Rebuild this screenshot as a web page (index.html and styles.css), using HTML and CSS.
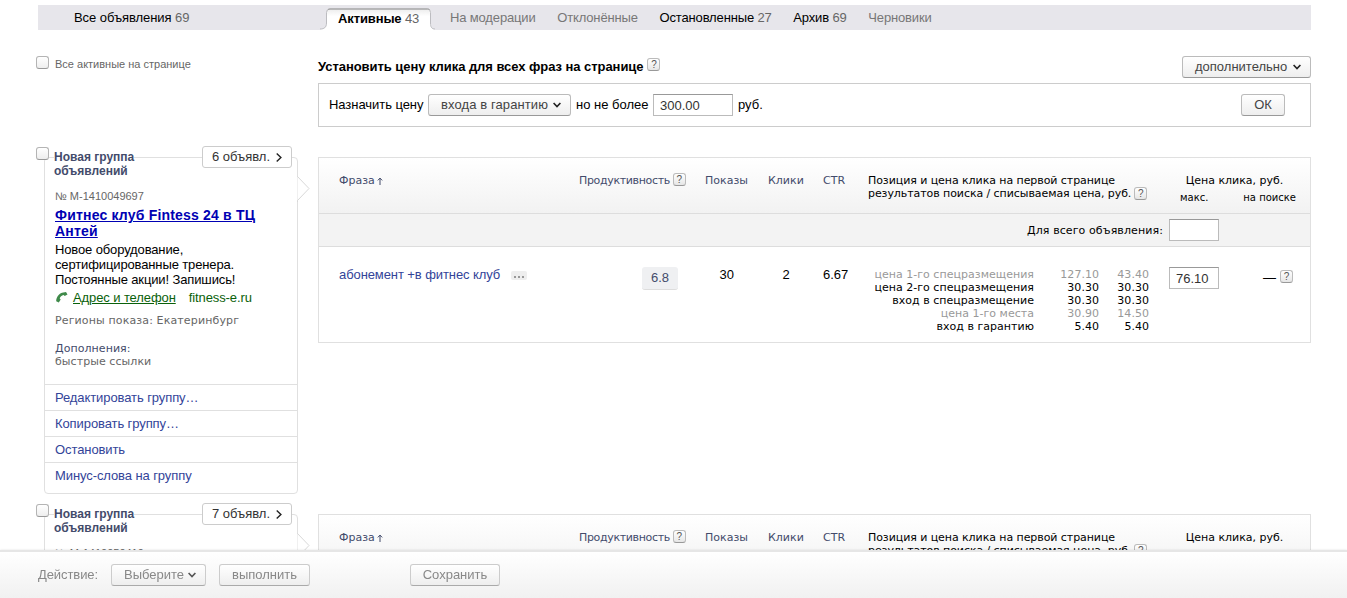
FILE: index.html
```
<!DOCTYPE html>
<html lang="ru">
<head>
<meta charset="utf-8">
<title>Активные объявления</title>
<link rel="stylesheet" href="styles.css">
</head>
<body>
<svg class="defs"><defs>
<linearGradient id="tabfill" x1="0" y1="0" x2="0" y2="1"><stop offset="0" stop-color="#ececec"/><stop offset=".35" stop-color="#fff"/></linearGradient>
<symbol id="chev" viewBox="0 0 8 6"><path d="M.6 1l3.4 3.600L7.400 1" fill="none" stroke="currentColor" stroke-width="1.6"/></symbol>
<symbol id="right" viewBox="0 0 6 9"><path d="M.7.6l4.200 3.900L.7 8.400" fill="none" stroke="currentColor" stroke-width="1.4"/></symbol>
<symbol id="up" viewBox="0 0 5 8"><path d="M2.500 8V1M.3 3.400l2.200-2.300 2.200 2.300" fill="none" stroke="currentColor" stroke-width="1"/></symbol>
<symbol id="phone" viewBox="0 0 12 11"><path d="M6 .8L10 0l1.500 2.400-2.800 1.700-1-1.100C5.600 3.400 4.200 4.800 3.700 6.600l1 .9-1.900 2.900L.2 9.200C.2 5.400 2.600 2 6 .8z" fill="#3f8a4a"/></symbol>
<symbol id="nose" viewBox="0 0 13 26"><path d="M.5 0v.5L12 12.500.5 24.500v1.500" fill="#fff" stroke="#d8d8d8"/></symbol>
</defs></svg>

<nav class="tabs">
  <a class="tab all">Все объявления <i>69</i></a>
  <a class="tab active"><svg class="tab-shape" viewBox="0 0 115 22"><path d="M0 21.500C4 21 6.500 19.500 6.500 15V4.500Q6.500 1 10 1H107.500Q111 1 111 4.500V15C111 19.500 112 21 115 21.500V22H0z" fill="url(#tabfill)"/><path d="M0 21C4 21 6.500 19.500 6.500 15V4.500Q6.500 1 10 1H107.500Q110.500 1 110.500 4.500V15C110.500 19.500 112 21 115 21" fill="none" stroke="#bcbcc0"/><path d="M8 1.500Q8.500 1 10 1H107.500Q109 1 109.500 1.500" fill="none" stroke="#999"/></svg><b>Активные</b> <i>43</i></a>
  <a class="tab muted">На модерации</a>
  <a class="tab muted">Отклонённые</a>
  <a class="tab">Остановленные <i>27</i></a>
  <a class="tab">Архив <i>69</i></a>
  <a class="tab muted">Черновики</a>
</nav>

<section class="top">
  <div class="select-all"><span class="check"></span><span>Все активные на странице</span></div>
  <div class="pricing">
    <div class="pricing-head"><h2>Установить цену клика для всех фраз на странице</h2><span class="help">?</span><span class="btn more">дополнительно<svg class="chev"><use href="#chev"/></svg></span></div>
    <div class="pricing-box">
      <span class="assign">Назначить цену</span><span class="btn entry">входа в гарантию<svg class="chev"><use href="#chev"/></svg></span><span class="limit">но не более</span><span class="input max">300.00</span><span class="unit">руб.</span><span class="btn ok">ОК</span>
    </div>
  </div>
</section>

<section class="group">
  <div class="card">
    <span class="check"></span>
    <span class="count">6 объявл.<svg class="right"><use href="#right"/></svg></span>
    <svg class="nose"><use href="#nose"/></svg>
    <h3>Новая группа<br>объявлений</h3>
    <div class="num">№ М-1410049697</div>
    <a class="ad-title">Фитнес клуб Fintess 24 в ТЦ<br>Антей</a>
    <p class="ad-text">Новое оборудование,<br>сертифицированные тренера.<br>Постоянные акции! Запишись!</p>
    <div class="contact"><svg class="phone"><use href="#phone"/></svg><u>Адрес и телефон</u><span class="site">fitness-e.ru</span></div>
    <div class="region">Регионы показа: Екатеринбург</div>
    <div class="extras"><b>Дополнения:</b><br>быстрые ссылки</div>
    <ul class="actions"><li>Редактировать группу…</li><li>Копировать группу…</li><li>Остановить</li><li>Минус-слова на группу</li></ul>
  </div>
  <div class="table">
    <div class="row head">
      <div class="link">Фраза<svg class="up"><use href="#up"/></svg></div>
      <div class="link productivity">Продуктивность<span class="help">?</span></div>
      <div class="link">Показы</div>
      <div class="link">Клики</div>
      <div class="link">CTR</div>
      <div class="position">Позиция и цена клика на первой странице<br>результатов поиска / списываемая цена, руб.<span class="help">?</span></div>
      <div class="price-head"><div class="price-title">Цена клика, руб.</div><div class="price-sub"><span>макс.</span><span>на поиске</span></div></div>
    </div>
    <div class="whole"><span>Для всего объявления:</span><span class="input"></span></div>
    <div class="row phrase">
      <div class="name"><span>абонемент +в фитнес клуб</span><span class="dots"><i></i><i></i><i></i></span></div>
      <div class="prod">6.8</div>
      <div class="n">30</div>
      <div class="n">2</div>
      <div class="n ctr">6.67</div>
      <div class="bids">
        <span class="dim">цена 1-го спецразмещения</span><span class="dim">127.10</span><span class="dim">43.40</span>
        <span>цена 2-го спецразмещения</span><span>30.30</span><span>30.30</span>
        <span>вход в спецразмещение</span><span>30.30</span><span>30.30</span>
        <span class="dim">цена 1-го места</span><span class="dim">30.90</span><span class="dim">14.50</span>
        <span>вход в гарантию</span><span>5.40</span><span>5.40</span>
      </div>
      <div class="own"><span class="input">76.10</span><span class="dash">—</span><span class="help">?</span></div>
    </div>
  </div>
</section>

<section class="group last">
  <div class="card">
    <span class="check"></span>
    <span class="count">7 объявл.<svg class="right"><use href="#right"/></svg></span>
    <svg class="nose"><use href="#nose"/></svg>
    <h3>Новая группа<br>объявлений</h3>
    <div class="num">№ М-1410050419</div>
  </div>
  <div class="table">
    <div class="row head">
      <div class="link">Фраза<svg class="up"><use href="#up"/></svg></div>
      <div class="link productivity">Продуктивность<span class="help">?</span></div>
      <div class="link">Показы</div>
      <div class="link">Клики</div>
      <div class="link">CTR</div>
      <div class="position">Позиция и цена клика на первой странице<br>результатов поиска / списываемая цена, руб.<span class="help">?</span></div>
      <div class="price-head"><div class="price-title">Цена клика, руб.</div></div>
    </div>
  </div>
</section>

<footer class="bar"><span class="action">Действие:</span><span class="btn choose">Выберите<svg class="chev"><use href="#chev"/></svg></span><span class="btn run">выполнить</span><span class="btn save">Сохранить</span></footer>
</body>
</html>
```
FILE: styles.css
```
* { box-sizing: border-box; }
html, body { height: 100%; }
body { display: flex; flex-direction: column; height: 598px; margin: 0; overflow: hidden; background: #fff; color: #000; font: 13px/15px "Liberation Sans", Arial, sans-serif; white-space: nowrap; }
h2, h3, p, ul { margin: 0; padding: 0; }
ul { list-style: none; }
i { font-style: normal; }
svg { flex: none; display: block; }
.defs { position: absolute; width: 0; height: 0; }

/* Tabs */
.tabs { display: flex; flex: none; margin: 5px 36px 0 38px; height: 25px; background: #e7e6eb; letter-spacing: -.15px; }
.tab { line-height: 25px; margin-right: 21.7px; }
.tab i { color: #666; }
.tab.muted { color: #777; }
.tab.all { width: 282px; padding-left: 36px; margin: 0; letter-spacing: -.06px; }
.tab.active { position: relative; width: 115px; height: 22px; margin: 3px 15px 0 0; padding-left: 18px; line-height: 21px; letter-spacing: -.12px; }
.tab-shape { position: absolute; left: 0; top: 0; width: 115px; height: 22px; }
.tab.active b, .tab.active i { position: relative; }

/* Price setter */
.top { display: flex; flex: none; height: 97px; }
.select-all { display: flex; width: 318px; padding: 26px 0 0 36px; color: #666; font-size: 11px; line-height: 17px; }
.check { flex: none; width: 13px; height: 13px; border: 1px solid #b4b4b4; border-bottom-color: #999; border-radius: 3px; background: linear-gradient(#fff, #eee); }
.select-all .check { margin-right: 6px; }
.pricing { width: 993px; padding-top: 26px; }
.pricing-head { display: flex; height: 27px; }
h2 { font-size: 13px; line-height: 21px; letter-spacing: -.05px; }
.help { display: inline-block; flex: none; width: 13px; height: 13px; border: 1px solid #bbb; border-bottom-color: #999; border-radius: 3px; background: linear-gradient(#fff, #e6e6e6); color: #555; font: 10px/11px "Liberation Sans", sans-serif; text-align: center; }
.pricing-head .help { margin: 2px 0 0 4px; }
.btn { display: flex; flex: none; align-items: center; height: 22px; border: 1px solid #bbb; border-bottom-color: #999; border-radius: 3px; background: linear-gradient(#fff, #eee); color: #444; line-height: 20px; }
.chev { width: 8px; height: 6px; color: #222; margin-left: auto; }
.more { width: 129px; margin-left: auto; padding: 0 9px 0 12px; }
.pricing-box { display: flex; align-items: center; height: 44px; padding: 0 25px 0 10px; border: 1px solid #ccc; }
.assign, .limit, .unit { padding-bottom: 1px; }
.assign { width: 99px; letter-spacing: -.05px; }
.entry { width: 143px; margin-right: 5px; padding: 0 9px 0 12px; letter-spacing: .1px; }
.limit { width: 77px; }
.input { display: block; flex: none; width: 50px; height: 22px; padding-left: 6px; border: 1px solid #bbb; border-top-color: #999; background: #fff; color: #333; line-height: 21px; font-family: "Liberation Sans", Arial, sans-serif; font-size: 13px; }
.max { width: 80px; margin-right: 5px; }
.ok { width: 44px; margin-left: auto; justify-content: center; }

/* Ad group */
.group { display: flex; flex: none; align-items: flex-start; height: 357px; margin-top: 30px; }
.group.last { height: 84px; margin: 0; overflow: hidden; padding-top: 12px; margin-top: -12px; }
.card { position: relative; flex: none; width: 254px; height: 337px; margin: 0 20px 0 44px; padding-left: 10px; border: 1px solid #e0e0e0; border-radius: 4px; }
.card .check { position: absolute; left: -9px; top: -11px; }
.count { position: absolute; top: -12px; left: 157px; display: flex; align-items: center; width: 90px; height: 22px; padding: 0 9px; border: 1px solid #ccc; border-radius: 3px; background: #fff; color: #333; line-height: 20px; }
.right { width: 6px; height: 9px; margin-left: auto; color: #222; }
.nose { position: absolute; right: -13px; top: 18px; width: 13px; height: 26px; }
h3 { position: relative; width: 80px; margin: -8px 0 0 -1px; background: #fff; color: #434b6b; font-size: 12px; line-height: 14px; }
.num { margin-top: 12px; color: #666; font-size: 11px; line-height: 13px; }
.ad-title { display: block; margin-top: 4px; color: #0000b3; font-size: 14px; font-weight: bold; line-height: 16px; letter-spacing: .19px; text-decoration: underline; }
.ad-text { margin-top: 3px; letter-spacing: -.13px; }
.contact { display: flex; margin-top: 3px; color: #0a610a; letter-spacing: -.1px; }
.phone { width: 12px; height: 11px; margin: 2px 5px 0 1px; }
.site { margin-left: 13px; }
.region, .extras { margin-top: 9px; color: #666; font: 11px/13px "DejaVu Sans", Verdana, sans-serif; letter-spacing: .13px; }
.extras { margin-top: 15px; letter-spacing: .06px; }
.extras b { font-weight: normal; color: #434b6b; }
.actions { margin: 16px 0 0 -10px; }
.actions li { height: 26px; padding-left: 10px; border-top: 1px solid #e0e0e0; color: #334499; line-height: 25px; letter-spacing: -.09px; }

/* Phrases table */
.table { width: 993px; border: 1px solid #e0e0e0; }
.row { display: grid; grid-template-columns: 240px 126px 63px 55px 45px 292px 151px; padding-left: 20px; }
.head { height: 56px; padding-top: 16px; border-bottom: 1px solid #ddd; background: linear-gradient(#fff, #f2f2f2); font: 11px/13px "DejaVu Sans", Verdana, sans-serif; }
.link { display: flex; color: #434b6b; }
.productivity { letter-spacing: -.34px; }
.position { letter-spacing: -.07px; }
.up { width: 6px; height: 8px; margin: 3px 0 0 2px; }
.head .help { margin: 0 0 0 3px; vertical-align: top; letter-spacing: 0; }
.productivity .help { margin: -1px 0 0 3px; }
.price-title { padding-right: 2px; text-align: center; }
.price-sub { display: flex; justify-content: space-between; padding: 4px 15px 0 20px; font-size: 10px; line-height: 13px; }
.whole { display: flex; height: 33px; align-items: center; justify-content: flex-end; padding-right: 91px; border-bottom: 1px solid #ddd; background: #f3f3f3; font: 11px/13px "DejaVu Sans", Verdana, sans-serif; letter-spacing: .1px; }
.whole .input { margin-left: 6px; }
.phrase { height: 95px; padding-top: 20px; }
.name { display: flex; color: #334499; letter-spacing: -.09px; }
.dots { display: flex; gap: 2px; width: 16px; height: 9px; margin: 4px 0 0 11px; padding: 5px 0 0 3px; background: #eee; border-radius: 2px; }
.dots i { width: 2px; height: 2px; background: #999; }
.prod { width: 36px; height: 23px; margin-left: 63px; background: #eff0f2; border-bottom: 1px solid #ddd; border-radius: 3px; color: #434b6b; line-height: 22px; text-align: center; }
.n { padding-left: 14.5px; }
.n.ctr { padding-left: 0; }
.bids { display: grid; grid-template-columns: 166px 65px 50px; justify-items: end; align-content: start; padding-top: 1px; font: 11px/13px "DejaVu Sans", Verdana, sans-serif; }
.bids span { letter-spacing: .03px; }
.bids .dim { color: #999; }
.own { display: flex; padding-left: 9px; }
.dash { margin: 3px 4px 0 44px; }
.own .help { margin-top: 3px; }

/* Bottom bar */
.bar { position: fixed; left: 0; right: 0; bottom: 0; display: flex; align-items: flex-start; height: 48px; padding: 14px 0 0 38px; border-top: 2px solid #e6e6e6; padding-top: 12px; background: linear-gradient(#fff, #f1f1f1); box-shadow: 0 0 2px rgba(0,0,0,.12); color: #888; line-height: 21px; }
.bar .btn { border-color: #ccc; border-bottom-color: #aaa; color: #888; }
.bar .chev { color: #555; }
.action { width: 73px; letter-spacing: -.08px; }
.choose { width: 95px; margin-right: 13px; padding: 0 9px 0 12px; }
.run { width: 91px; margin-right: 100px; justify-content: center; }
.save { width: 90px; justify-content: center; }
```
